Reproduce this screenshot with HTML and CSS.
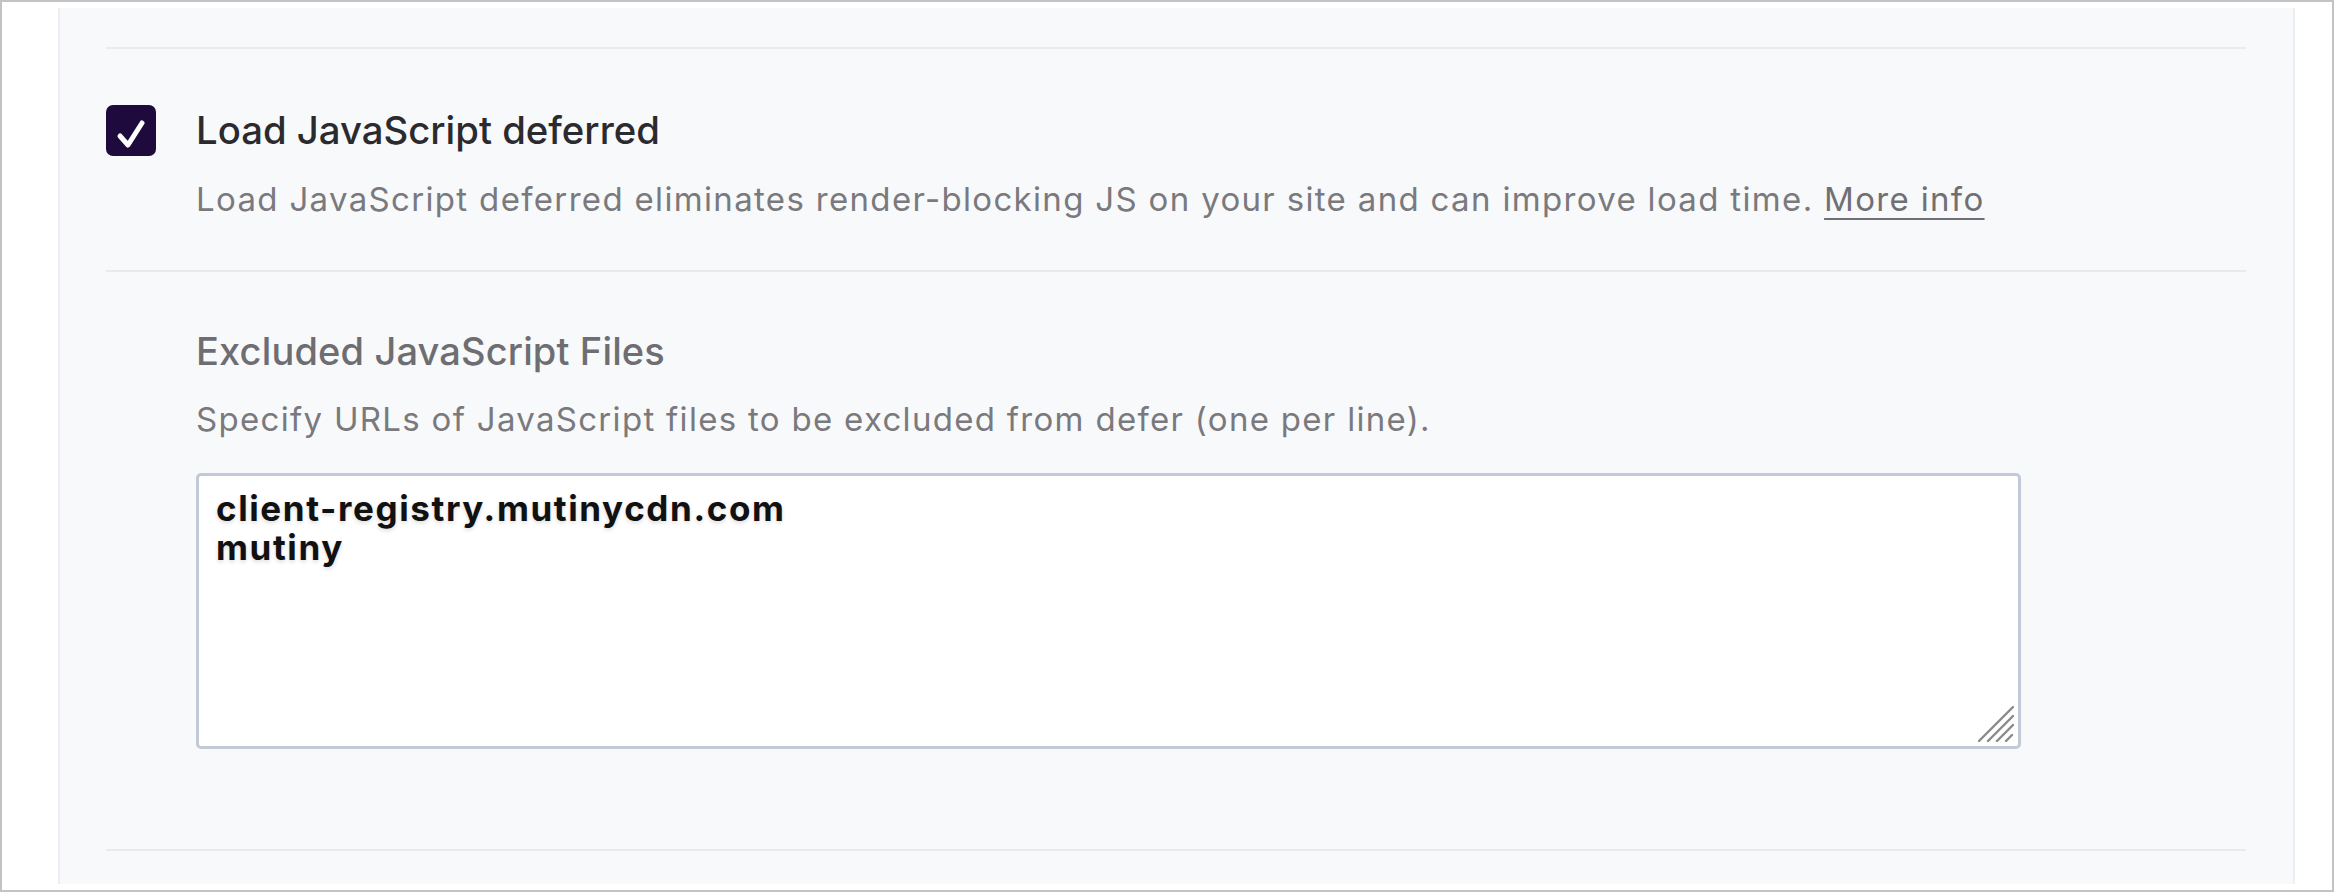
FILE: index.html
```html
<!DOCTYPE html>
<html lang="en">
<head>
    <meta charset="UTF-8">
    <meta name="viewport" content="width=device-width, initial-scale=1.0">
    <title>File Optimization</title>
    <link rel="stylesheet" href="styles.css">
</head>
<body>
    <div class="frame">
        <div class="panel">
            <hr class="divider first">

            <div class="option">
                <label class="check" for="defer_js">
                    <input type="checkbox" id="defer_js" name="defer_js" checked>
                    <svg viewBox="0 0 50 50" width="50" height="50" aria-hidden="true">
                        <polyline points="14,31 22,40 36,18" fill="none" stroke="#fff" stroke-width="5" stroke-linecap="round" stroke-linejoin="round"/>
                    </svg>
                </label>
                <div class="option-text">
                    <label class="option-title" for="defer_js">Load JavaScript deferred</label>
                    <p class="option-desc">Load JavaScript deferred eliminates render-blocking JS on your site and can improve load time. <a href="#">More info</a></p>
                </div>
            </div>

            <hr class="divider">

            <div class="sub-option">
                <label class="field-label" for="exclude_defer_js">Excluded JavaScript Files</label>
                <p class="field-help">Specify URLs of JavaScript files to be excluded from defer (one per line).</p>
                <div class="textarea-wrap">
                    <textarea id="exclude_defer_js" name="exclude_defer_js" spellcheck="false">client-registry.mutinycdn.com
mutiny</textarea>
                    <svg class="grip" viewBox="0 0 36 36" width="36" height="36" aria-hidden="true">
                        <g stroke="#8a8a8a" stroke-width="2.4" stroke-linecap="round">
                            <line x1="1" y1="35" x2="35" y2="1"/>
                            <line x1="10" y1="35" x2="35" y2="10"/>
                            <line x1="19" y1="35" x2="35" y2="19"/>
                            <line x1="28" y1="35" x2="34" y2="29"/>
                        </g>
                    </svg>
                </div>
            </div>

            <hr class="divider last">
        </div>
    </div>
</body>
</html>
```

FILE: styles.css
```css
html, body {
    margin: 0;
    background: #fff;
}
body {
    font-family: Inter, "Liberation Sans", Arial, sans-serif;
}
.frame {
    height: 892px;
    box-sizing: border-box;
    border: 2px solid #c3c3c3;
    padding: 6px 37px 6px 56px;
}
.panel {
    height: 100%;
    box-sizing: border-box;
    background: #f8f9fb;
    border-left: 2px solid #eceef1;
    border-right: 2px solid #eceef1;
    padding: 39px 47px 0 46px;
}
.divider {
    height: 2px;
    margin: 0;
    border: none;
    background: #e8eaed;
}
.option {
    display: flex;
    align-items: flex-start;
    margin-top: 56px;
}
.check {
    position: relative;
    flex: none;
    width: 50px;
    height: 51px;
    border-radius: 7px;
    background: #1e0a3c;
    cursor: pointer;
}
.check input {
    position: absolute;
    opacity: 0;
    margin: 0;
}
.check svg {
    display: block;
}
.option-text {
    margin-left: 40px;
    padding-top: 1px;
}
.option-title {
    display: block;
    font-size: 38.3px;
    line-height: 48px;
    font-weight: 500;
    color: #2b2b2f;
}
.option-desc {
    margin: 23px 0 49px;
    font-size: 33px;
    line-height: 44px;
    letter-spacing: 1.33px;
    color: #7a7a7e;
}
.option-desc a {
    color: #707074;
    text-decoration: underline;
    text-decoration-thickness: 2px;
    text-underline-offset: 7px;
}
.sub-option {
    padding: 56px 0 0 90px;
}
.field-label {
    display: block;
    font-size: 38px;
    line-height: 46px;
    font-weight: 500;
    letter-spacing: 0.15px;
    color: #6e6e72;
}
.field-help {
    margin: 23px 0 32px;
    font-size: 33px;
    line-height: 44px;
    letter-spacing: 1.3px;
    color: #7a7a7e;
}
.textarea-wrap {
    position: relative;
    width: 1825px;
    height: 276px;
    margin-bottom: 100px;
}
textarea {
    display: block;
    width: 100%;
    height: 100%;
    box-sizing: border-box;
    margin: 0;
    padding: 13px 17px;
    border: 3px solid #c3cad7;
    border-radius: 5px;
    background: #fff;
    resize: none;
    outline: none;
    font-family: Inter, "Liberation Sans", Arial, sans-serif;
    font-size: 35px;
    line-height: 39px;
    font-weight: 700;
    letter-spacing: 1.6px;
    color: #111;
    text-shadow: 0 2px 4px rgba(0, 0, 0, 0.14);
}
.grip {
    position: absolute;
    right: 7px;
    bottom: 7px;
    pointer-events: none;
}
```
